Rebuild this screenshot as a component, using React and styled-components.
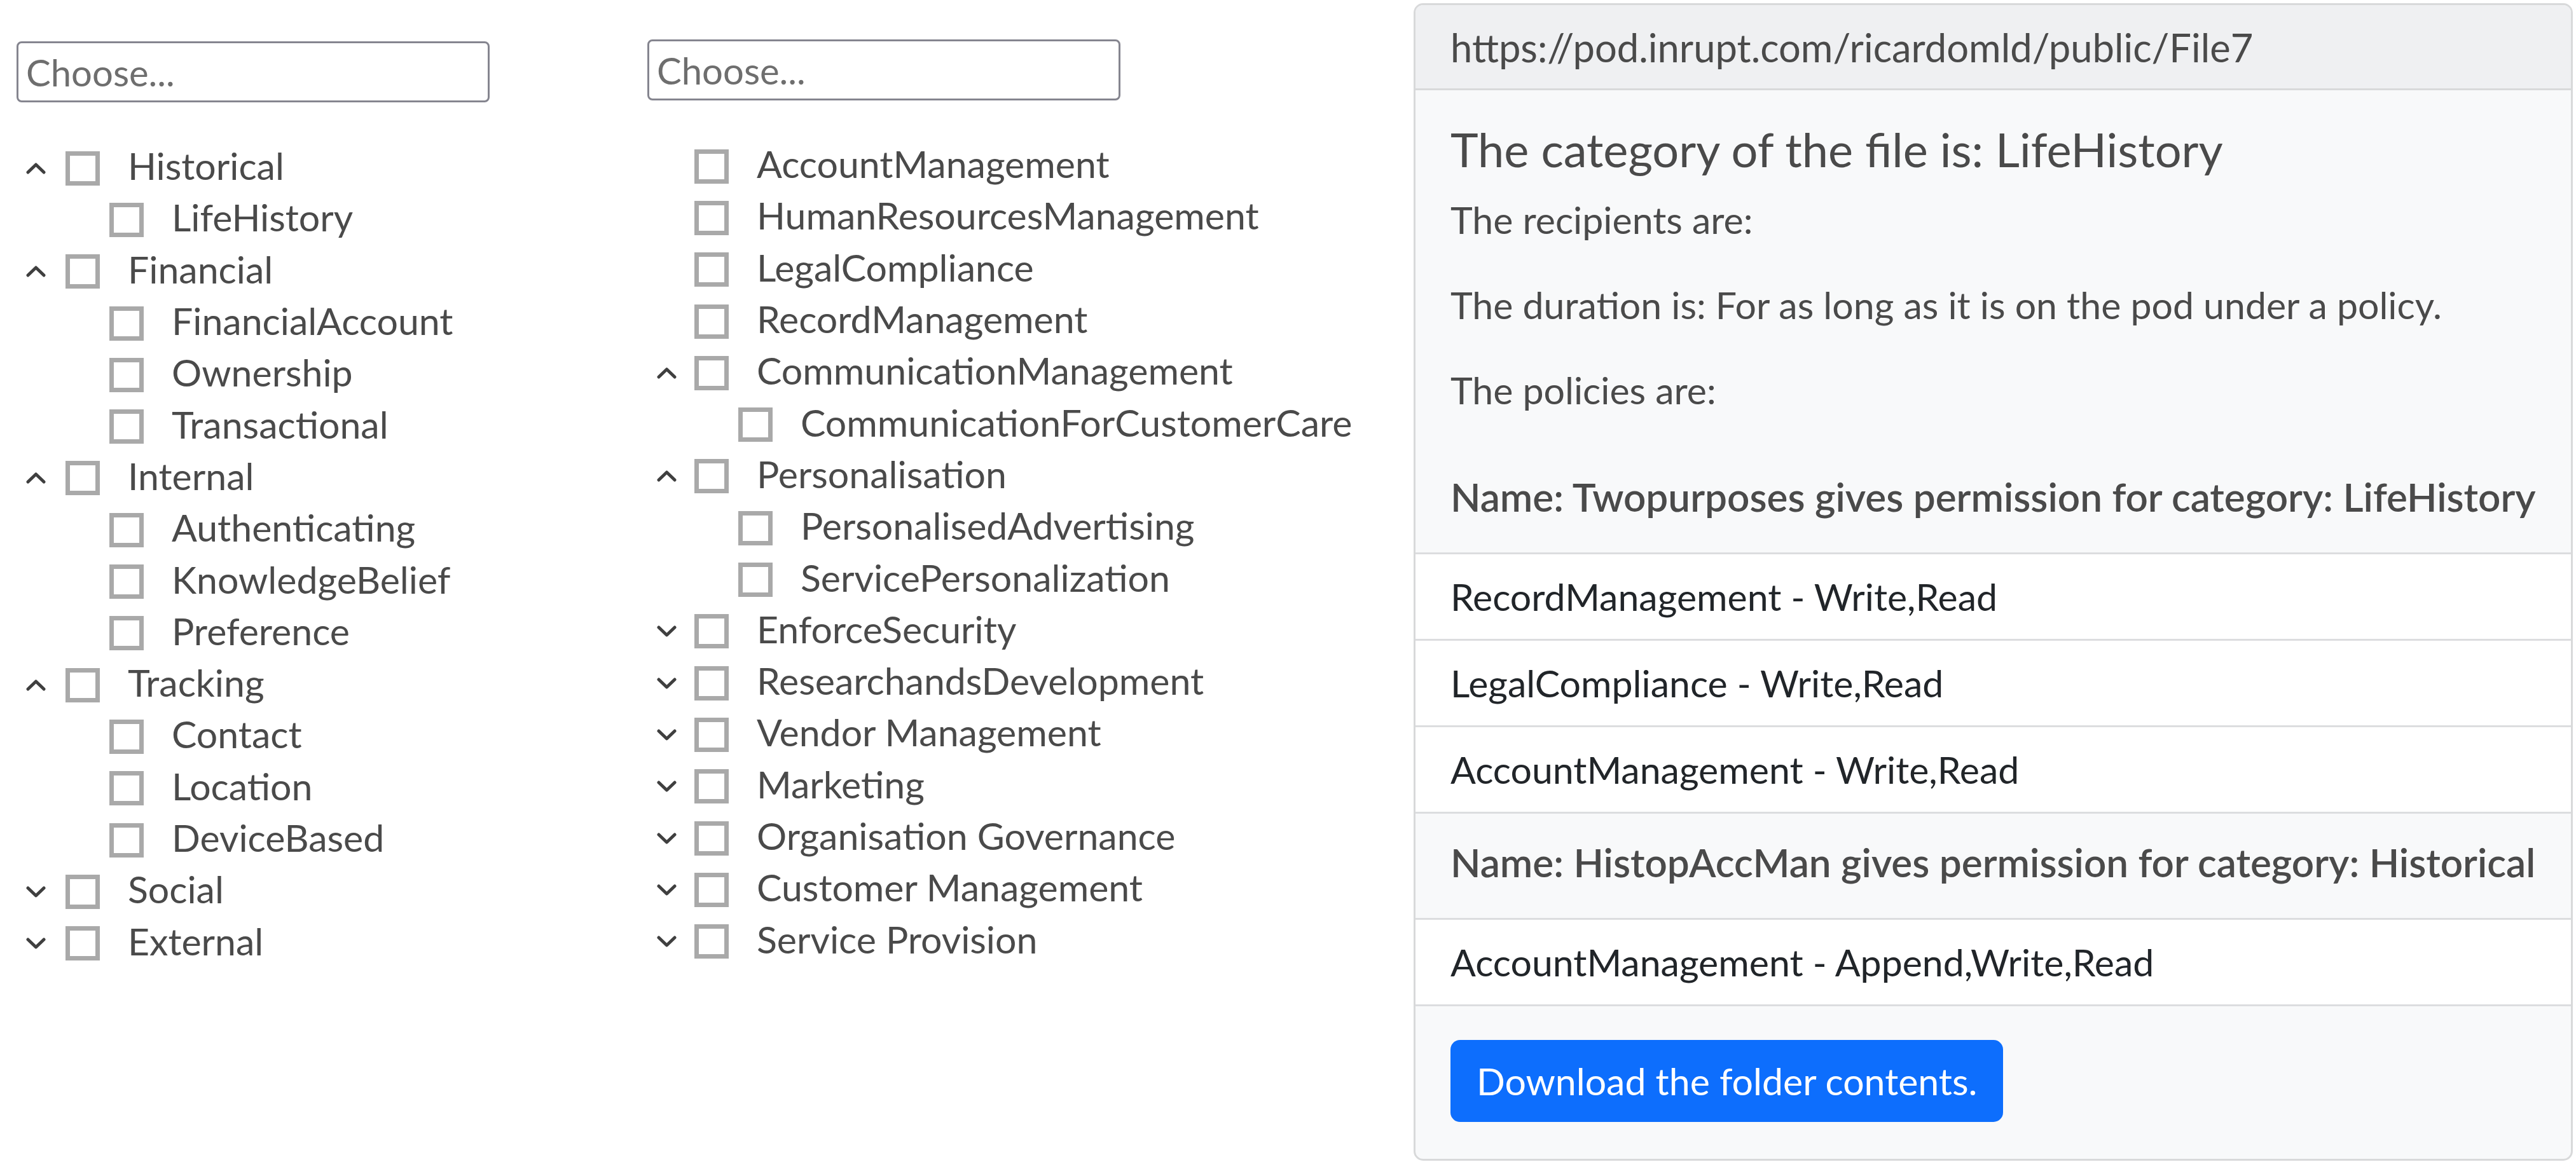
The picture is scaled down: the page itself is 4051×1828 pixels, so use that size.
import React from 'react';
import styled, { createGlobalStyle } from 'styled-components';

const GlobalStyle = createGlobalStyle`
  html, body {
    margin: 0;
    padding: 0;
    background: #fff;
  }
  body {
    font-family: Lato, "Open Sans", sans-serif;
    color: #4a4a4a;
  }
  * {
    box-sizing: border-box;
  }
`;

const Page = styled.div`
  display: grid;
  grid-template-columns: 1018px 1205px 1823px;
  height: 1828px;
  padding-top: 5px;
  overflow: hidden;
`;

const Column = styled.div`
  padding-top: ${(props) => props.top}px;
  padding-left: ${(props) => props.left || 0}px;
`;

const Search = styled.input`
  display: block;
  width: 744px;
  height: 96px;
  border: 3px solid #85858f;
  border-radius: 8px;
  padding: 0 12px;
  font-family: Lato, sans-serif;
  font-size: 58px;
  color: #4a4a4a;
  background: #fff;
  outline: none;

  &::placeholder {
    color: #6e6e6e;
  }
`;

const TreeList = styled.ul`
  list-style: none;
  margin: 63px 0 0;
  padding: 0;
`;

const Row = styled.li`
  display: flex;
  align-items: center;
  height: 81.3px;
  padding-left: ${(props) => props.level * 69}px;
  font-size: 59px;
  color: #4a4a4a;
  white-space: nowrap;
`;

const ToggleSlot = styled.span`
  display: flex;
  align-items: center;
  width: ${(props) => props.width}px;
  height: 100%;
  padding-left: 15px;
  flex-shrink: 0;
`;

const Box = styled.span`
  width: 54px;
  height: 54px;
  border: 7px solid #a9a9a9;
  background: #fff;
  flex-shrink: 0;
  margin-right: 44px;
`;

const Label = styled.span`
  line-height: 1;
  margin-top: -8px;
`;

const Card = styled.div`
  display: flex;
  flex-direction: column;
  height: 1821px;
  border: 3px solid #d8d9da;
  border-radius: 15px;
  background: #f8f9fa;
  overflow: hidden;
`;

const CardHeader = styled.div`
  display: flex;
  align-items: center;
  height: 134px;
  padding: 0 55px;
  background: #eff0f2;
  border-bottom: 3px solid #d8d9da;
  font-size: 61.5px;
  color: #4a4a4a;
`;

const Summary = styled.div`
  padding: 54px 55px 52px;
`;

const Title = styled.h4`
  margin: 0 0 33px;
  font-size: 74px;
  font-weight: 400;
  line-height: 78px;
  color: #4a4a4a;
`;

const Text = styled.p`
  margin: 0 0 56px;
  font-size: 59px;
  line-height: 78px;
  color: #4a4a4a;

  &:last-child {
    margin-bottom: 0;
  }
`;

const PolicyName = styled.div`
  height: 167px;
  padding: 37px 55px 0;
  border-bottom: 3px solid #dcdddf;
  font-size: 62px;
  font-weight: 600;
  line-height: 78px;
  color: #4a4a4a;
  white-space: nowrap;
`;

const PolicyItem = styled.div`
  display: flex;
  align-items: center;
  height: 136px;
  padding: 0 55px;
  background: #fff;
  border-bottom: 3px solid #dcdddf;
  font-size: 59px;
  color: #212529;
`;

const Footer = styled.div`
  padding: 53px 55px;
`;

const DownloadButton = styled.button`
  height: 129px;
  padding: 0 41px;
  border: none;
  border-radius: 15px;
  background: #0d6efd;
  color: #fff;
  font-family: Lato, sans-serif;
  font-size: 59px;
  cursor: pointer;
`;

const Chevron = ({ open }) => (
  <svg width="31" height="18" viewBox="0 0 31 18" fill="none">
    <polyline
      points={open ? '3,15 15.5,3 28,15' : '3,3 15.5,15 28,3'}
      stroke="#3f3f3f"
      strokeWidth="5"
      strokeLinecap="round"
      strokeLinejoin="round"
    />
  </svg>
);

const TreeNode = ({ node, slot }) => (
  <>
    <Row level={0}>
      <ToggleSlot width={slot}>{node.toggle && <Chevron open={node.toggle === 'open'} />}</ToggleSlot>
      <Box />
      <Label>{node.label}</Label>
    </Row>
    {node.toggle === 'open' &&
      node.children.map((child) => (
        <Row key={child} level={1}>
          <ToggleSlot width={slot} />
          <Box />
          <Label>{child}</Label>
        </Row>
      ))}
  </>
);

const Tree = ({ nodes, slot }) => (
  <TreeList>
    {nodes.map((node) => (
      <TreeNode key={node.label} node={node} slot={slot} />
    ))}
  </TreeList>
);

const categories = [
  { label: 'Historical', toggle: 'open', children: ['LifeHistory'] },
  { label: 'Financial', toggle: 'open', children: ['FinancialAccount', 'Ownership', 'Transactional'] },
  { label: 'Internal', toggle: 'open', children: ['Authenticating', 'KnowledgeBelief', 'Preference'] },
  { label: 'Tracking', toggle: 'open', children: ['Contact', 'Location', 'DeviceBased'] },
  { label: 'Social', toggle: 'closed', children: [] },
  { label: 'External', toggle: 'closed', children: [] },
];

const purposes = [
  { label: 'AccountManagement' },
  { label: 'HumanResourcesManagement' },
  { label: 'LegalCompliance' },
  { label: 'RecordManagement' },
  { label: 'CommunicationManagement', toggle: 'open', children: ['CommunicationForCustomerCare'] },
  { label: 'Personalisation', toggle: 'open', children: ['PersonalisedAdvertising', 'ServicePersonalization'] },
  { label: 'EnforceSecurity', toggle: 'closed', children: [] },
  { label: 'ResearchandsDevelopment', toggle: 'closed', children: [] },
  { label: 'Vendor Management', toggle: 'closed', children: [] },
  { label: 'Marketing', toggle: 'closed', children: [] },
  { label: 'Organisation Governance', toggle: 'closed', children: [] },
  { label: 'Customer Management', toggle: 'closed', children: [] },
  { label: 'Service Provision', toggle: 'closed', children: [] },
];

const policies = [
  {
    name: 'Twopurposes',
    category: 'LifeHistory',
    rules: ['RecordManagement - Write,Read', 'LegalCompliance - Write,Read', 'AccountManagement - Write,Read'],
  },
  {
    name: 'HistopAccMan',
    category: 'Historical',
    rules: ['AccountManagement - Append,Write,Read'],
  },
];

const App = () => {
  return (
    <>
      <GlobalStyle />
      <Page>
        <Column top={60} left={26}>
          <Search placeholder="Choose..." />
          <Tree nodes={categories} slot={77} />
        </Column>
        <Column top={57}>
          <Search placeholder="Choose..." />
          <Tree nodes={purposes} slot={74} />
        </Column>
        <Card>
          <CardHeader>https://pod.inrupt.com/ricardomld/public/File7</CardHeader>
          <Summary>
            <Title>The category of the file is: LifeHistory</Title>
            <Text>The recipients are:</Text>
            <Text>The duration is: For as long as it is on the pod under a policy.</Text>
            <Text>The policies are:</Text>
          </Summary>
          {policies.map((policy) => (
            <div key={policy.name}>
              <PolicyName>
                Name: {policy.name} gives permission for category: {policy.category}
              </PolicyName>
              {policy.rules.map((rule) => (
                <PolicyItem key={rule}>{rule}</PolicyItem>
              ))}
            </div>
          ))}
          <Footer>
            <DownloadButton>Download the folder contents.</DownloadButton>
          </Footer>
        </Card>
      </Page>
    </>
  );
};

export default App;
